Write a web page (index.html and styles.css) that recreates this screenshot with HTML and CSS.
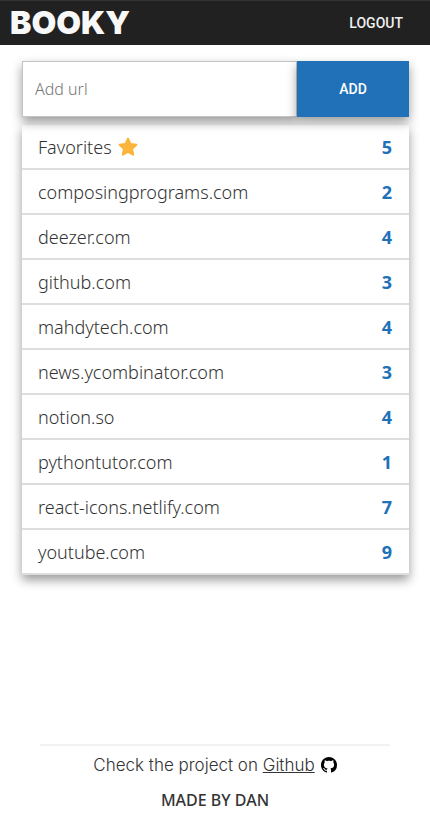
FILE: index.html
```html
<!DOCTYPE html>
<html lang="en">
<head>
  <meta charset="utf-8">
  <meta name="viewport" content="width=device-width, initial-scale=1">
  <title>Booky</title>
  <link rel="stylesheet" href="styles.css">
</head>
<body>
  <header class="navbar">
    <a class="logo" href="#">BOOKY</a>
    <button class="logout" type="button">LOGOUT</button>
  </header>

  <main class="content">
    <form class="add-form">
      <input class="url-input" type="text" placeholder="Add url" aria-label="Add url">
      <button class="add-button" type="button">ADD</button>
    </form>

    <ul class="sites">
      <li><a class="site" href="#"><span class="name">Favorites
        <svg class="star" viewBox="0 0 20 20" aria-hidden="true"><path d="M10 1.6l2.5 5.3 5.9.8-4.3 4.1 1.1 5.9-5.2-2.9-5.2 2.9 1.1-5.9-4.3-4.1 5.9-.8z"/></svg></span><span class="count">5</span></a></li>
      <li><a class="site" href="#"><span class="name">composingprograms.com</span><span class="count">2</span></a></li>
      <li><a class="site" href="#"><span class="name">deezer.com</span><span class="count">4</span></a></li>
      <li><a class="site" href="#"><span class="name">github.com</span><span class="count">3</span></a></li>
      <li><a class="site" href="#"><span class="name">mahdytech.com</span><span class="count">4</span></a></li>
      <li><a class="site" href="#"><span class="name">news.ycombinator.com</span><span class="count">3</span></a></li>
      <li><a class="site" href="#"><span class="name">notion.so</span><span class="count">4</span></a></li>
      <li><a class="site" href="#"><span class="name">pythontutor.com</span><span class="count">1</span></a></li>
      <li><a class="site" href="#"><span class="name">react-icons.netlify.com</span><span class="count">7</span></a></li>
      <li><a class="site" href="#"><span class="name">youtube.com</span><span class="count">9</span></a></li>
    </ul>
  </main>

  <footer class="footer">
    <p class="project">
      <span>Check the project on <a href="#">Github</a></span>
      <svg class="github" viewBox="0 0 16 16" aria-hidden="true"><path d="M8 0C3.58 0 0 3.58 0 8c0 3.54 2.29 6.53 5.47 7.59.4.07.55-.17.55-.38 0-.19-.01-.82-.01-1.49-2.01.37-2.53-.49-2.69-.94-.09-.23-.48-.94-.82-1.13-.28-.15-.68-.52-.01-.53.63-.01 1.08.58 1.23.82.72 1.21 1.87.87 2.33.66.07-.52.28-.87.51-1.07-1.78-.2-3.64-.89-3.64-3.95 0-.87.31-1.59.82-2.15-.08-.2-.36-1.02.08-2.12 0 0 .67-.21 2.2.82.64-.18 1.32-.27 2-.27s1.36.09 2 .27c1.53-1.04 2.2-.82 2.2-.82.44 1.1.16 1.92.08 2.12.51.56.82 1.27.82 2.15 0 3.07-1.87 3.75-3.65 3.95.29.25.54.73.54 1.48 0 1.07-.01 1.93-.01 2.2 0 .21.15.46.55.38A8.01 8.01 0 0 0 16 8c0-4.42-3.58-8-8-8z"/></svg>
    </p>
    <p class="credit">MADE BY DAN</p>
  </footer>
</body>
</html>
```

FILE: styles.css
```css
* {
  box-sizing: border-box;
}

body {
  display: flex;
  flex-direction: column;
  min-height: 100vh;
  margin: 0;
  background: #fff;
  color: #333;
  font-family: "Noto Sans", sans-serif;
}

a {
  color: inherit;
}

button {
  border: 0;
  font-family: Roboto, sans-serif;
  font-size: 14px;
  font-weight: 500;
  cursor: pointer;
}

.navbar {
  display: flex;
  align-items: center;
  justify-content: space-between;
  height: 45px;
  padding: 0 27px 0 10px;
  border-top: 1px solid #333;
  background: #212121;
}

.logo {
  color: #f8f8f8;
  font-family: Inter, sans-serif;
  font-size: 32px;
  font-weight: 900;
  line-height: 44px;
  text-decoration: none;
}

.logout {
  padding: 0;
  background: none;
  color: #f0f0f0;
}

.content {
  padding: 16px 21px 0 22px;
}

.add-form {
  position: relative;
  z-index: 1;
  display: flex;
  height: 56px;
}

.url-input,
.add-button,
.sites {
  box-shadow: 0 5px 10px rgba(0, 0, 0, 0.4);
}

.url-input {
  flex: 1;
  min-width: 0;
  padding: 0 12px;
  border: 1px solid #c4c4c4;
  border-radius: 0;
  background: #fff;
  color: #333;
  font-family: "Noto Sans", sans-serif;
  font-size: 16px;
  font-weight: 300;
}

.url-input::placeholder {
  color: #757575;
}

.add-button {
  width: 112px;
  background: #2071b8;
  color: #fff;
}

.sites {
  margin: 8px 0 0;
  padding: 0;
  list-style: none;
}

.site {
  display: flex;
  align-items: center;
  justify-content: space-between;
  height: 45px;
  padding: 0 17px 0 16px;
  border-bottom: 2px solid #ddd;
  background: #fff;
  text-decoration: none;
}

.name {
  display: flex;
  align-items: center;
  gap: 6px;
  font-size: 18px;
  font-weight: 300;
}

.star {
  width: 20px;
  height: 20px;
  fill: #fbb53b;
  stroke: #fbb53b;
  stroke-width: 2px;
  stroke-linejoin: round;
}

.count {
  color: #2071b8;
  font-size: 18px;
  font-weight: 700;
}

.footer {
  margin: auto 40px 0;
  padding: 7px 0 8px;
  border-top: 2px solid #f2f2f2;
  text-align: center;
}

.project {
  display: flex;
  align-items: center;
  justify-content: center;
  gap: 6px;
  margin: 0;
  font-family: Inter, sans-serif;
  font-size: 17px;
  font-weight: 300;
  line-height: 24px;
}

.github {
  width: 16px;
  height: 16px;
  fill: #000;
}

.credit {
  margin: 11px 0 0;
  font-family: "Noto Sans", sans-serif;
  font-size: 16px;
  font-weight: 500;
  line-height: 24px;
}
```
